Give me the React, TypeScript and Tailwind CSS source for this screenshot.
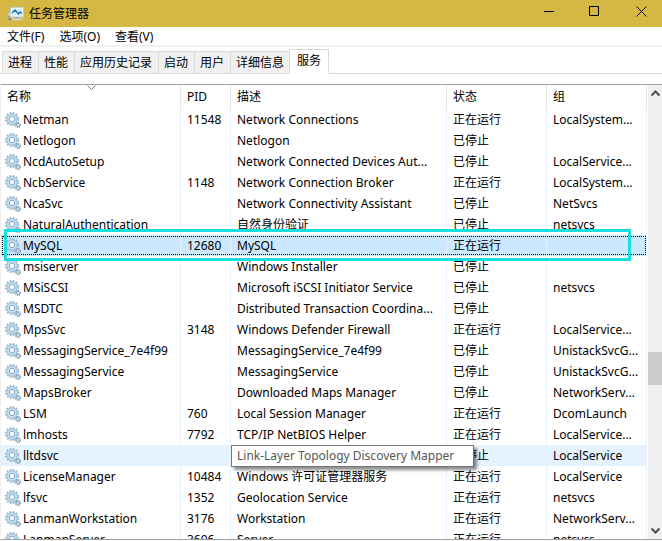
import { useState } from 'react';

const services: string[][] = [
  ['Netman', '11548', 'Network Connections', '正在运行', 'LocalSystem...'],
  ['Netlogon', '', 'Netlogon', '已停止', ''],
  ['NcdAutoSetup', '', 'Network Connected Devices Aut...', '已停止', 'LocalService...'],
  ['NcbService', '1148', 'Network Connection Broker', '正在运行', 'LocalSystem...'],
  ['NcaSvc', '', 'Network Connectivity Assistant', '已停止', 'NetSvcs'],
  ['NaturalAuthentication', '', '自然身份验证', '已停止', 'netsvcs'],
  ['MySQL', '12680', 'MySQL', '正在运行', ''],
  ['msiserver', '', 'Windows Installer', '已停止', ''],
  ['MSiSCSI', '', 'Microsoft iSCSI Initiator Service', '已停止', 'netsvcs'],
  ['MSDTC', '', 'Distributed Transaction Coordina...', '已停止', ''],
  ['MpsSvc', '3148', 'Windows Defender Firewall', '正在运行', 'LocalService...'],
  ['MessagingService_7e4f99', '', 'MessagingService_7e4f99', '已停止', 'UnistackSvcG...'],
  ['MessagingService', '', 'MessagingService', '已停止', 'UnistackSvcG...'],
  ['MapsBroker', '', 'Downloaded Maps Manager', '已停止', 'NetworkServ...'],
  ['LSM', '760', 'Local Session Manager', '正在运行', 'DcomLaunch'],
  ['lmhosts', '7792', 'TCP/IP NetBIOS Helper', '正在运行', 'LocalService...'],
  ['lltdsvc', '', 'Link-Layer Topology Discovery Mapper', '已停止', 'LocalService'],
  ['LicenseManager', '10484', 'Windows 许可证管理器服务', '正在运行', 'LocalService'],
  ['lfsvc', '1352', 'Geolocation Service', '正在运行', 'netsvcs'],
  ['LanmanWorkstation', '3176', 'Workstation', '正在运行', 'NetworkServ...'],
  ['LanmanServer', '3696', 'Server', '正在运行', 'netsvcs'],
];

const columns = ['名称', 'PID', '描述', '状态', '组'];
const tabs = ['进程', '性能', '应用历史记录', '启动', '用户', '详细信息', '服务'];
const menus = ['文件(F)', '选项(O)', '查看(V)'];

function GearIcon() {
  return (
    <svg width="16" height="17" viewBox="0 0 16 17" className="shrink-0" aria-hidden="true">
      <circle cx="7" cy="8" r="6.2" fill="none" stroke="#9cb6c8" strokeWidth="1.8" strokeDasharray="1.8 1.446" />
      <circle cx="7" cy="8" r="4.1" fill="none" stroke="#bfdff2" strokeWidth="3" />
      <circle cx="7" cy="8" r="5.3" fill="none" stroke="#8db2cb" strokeWidth="0.7" />
      <circle cx="7" cy="8" r="2.7" fill="#fff" stroke="#7f9fb8" strokeWidth="0.9" />
      <circle cx="13" cy="14" r="2.5" fill="none" stroke="#7f9cb2" strokeWidth="1.300" strokeDasharray="1.05 0.913" />
      <circle cx="13" cy="14" r="1.5" fill="#eef6fb" stroke="#8ba8bc" strokeWidth="1.1" />
    </svg>
  );
}

function MonitorIcon() {
  return (
    <svg width="16" height="16" viewBox="0 0 16 16" aria-hidden="true">
      <path d="M0 6h3v8H0z" fill="#a9a58c" />
      <path d="M.5 6.500h1.500v3H.5z" fill="#e6e6dc" />
      <path d="M1 13.500h2" stroke="#4e6b66" />
      <rect x="2.500" y="1.500" width="13" height="9.500" fill="#e8f4fa" stroke="#c3cbcb" />
      <rect x="4" y="3" width="10" height="6.500" fill="#d3ecf8" />
      <path d="M4 7 7 4l3.500 4 1.500-2 2 1.500" stroke="#1479b4" strokeWidth="1.300" fill="none" />
      <path d="M7 11.500h4v1.500H7z" fill="#a7adab" />
      <path d="M4.500 13.500h9" stroke="#d8dcd8" strokeWidth="1.500" />
    </svg>
  );
}

function Chevron({ d }: { d: string }) {
  return (
    <svg width="9" height="7" viewBox="0 0 9 7" fill="none" stroke="#505050" strokeWidth="2" aria-hidden="true">
      <path d={d} />
    </svg>
  );
}

export default function App() {
  const [tab, setTab] = useState('服务');
  return (
    <div className="flex h-screen flex-col overflow-hidden bg-white font-['Noto_Sans','Noto_Sans_CJK_SC',sans-serif] text-xs text-black">
      <header className="flex h-[27px] shrink-0 items-center bg-[#d5b844] pl-2">
        <MonitorIcon />
        <h1 className="ml-[5px] flex-1 leading-4">任务管理器</h1>
        <div className="flex items-center self-stretch pb-1">
          <button aria-label="最小化" className="flex w-[45px] justify-center">
            <svg width="11" height="11" stroke="#000" fill="none"><path d="M0 5.5h10" /></svg>
          </button>
          <button aria-label="最大化" className="flex w-[45px] justify-center">
            <svg width="11" height="11" stroke="#000" fill="none"><path d="M.5.5h9v9h-9z" /></svg>
          </button>
          <button aria-label="关闭" className="flex w-[45px] justify-center pl-[3px]">
            <svg width="11" height="11" stroke="#000" fill="none"><path d="m.5.500 10 10m0-10-10 10" /></svg>
          </button>
        </div>
      </header>

      <nav className="flex h-5 shrink-0 items-end gap-[15px] border-b-2 border-[#f0f0f0] pl-[7px]">
        {menus.map((m) => (
          <button key={m} className="leading-4">{m}</button>
        ))}
      </nav>

      <div role="tablist" className="mt-[2px] flex h-[25px] shrink-0 items-end border-b border-[#d9d9d9] pl-[2px]">
        {tabs.map((t) => (
          <button
            key={t}
            role="tab"
            aria-selected={t === tab}
            onClick={() => setTab(t)}
            className={
              t === tab
                ? '-mb-px -ml-px flex h-[25px] items-center border border-[#d9d9d9] border-b-white bg-white px-[7px] pb-[2px]'
                : 'flex h-[22px] items-center border-t border-l border-[#d9d9d9] bg-[#f0f0f0] pt-px pr-[6px] pl-[5px]'
            }
          >
            {t}
          </button>
        ))}
      </div>

      <main className="mt-[10px] mb-px flex min-h-0 flex-1 border-y border-y-[#a0a0a0] border-l border-l-[#f0f0f0]">
        <div className="min-w-0 flex-1 overflow-hidden">
          <table className="w-full table-fixed border-separate border-spacing-0 text-left">
            <colgroup>
              <col className="w-[180px]" />
              <col className="w-[50px]" />
              <col className="w-[216px]" />
              <col className="w-[100px]" />
              <col />
            </colgroup>
            <thead>
              <tr className="h-6">
                {columns.map((c, i) => (
                  <th key={c} scope="col" className="relative border-r border-[#e5e5e5] p-0 pl-[6px] font-normal">
                    {c}
                    {i === 0 && (
                      <svg width="9" height="5" className="absolute top-0 left-[86px]" fill="none" stroke="#808080" aria-hidden="true">
                        <path d="m.5.500 4 4 4-4" />
                      </svg>
                    )}
                  </th>
                ))}
              </tr>
            </thead>
            <tbody>
              {services.map((s) => {
                const selected = s[0] === 'MySQL';
                const hovered = s[0] === 'lltdsvc';
                return (
                  <tr key={s[0]} className={`relative h-[21px] ${selected ? 'bg-[#cce8ff]' : hovered ? 'bg-[#e5f3ff]' : ''}`}>
                    <td className="border-r border-[#e5f1ff] p-0 pl-1">
                      <div className="flex h-[21px] items-center gap-[2px]">
                        <GearIcon />
                        <span>{s[0]}</span>
                      </div>
                      {selected && (
                        <>
                          <span className="absolute inset-x-px top-px bottom-px border border-dotted border-black" />
                          <span className="absolute -top-[6px] right-4 -bottom-[5px] left-[3px] z-10 border-3 border-[#18dfe0]" />
                        </>
                      )}
                    </td>
                    <td className="border-r border-[#e5f1ff] p-0 pl-[6px]">{s[1]}</td>
                    <td className="border-r border-[#e5f1ff] p-0 pl-[6px] whitespace-nowrap">
                      {hovered ? (
                        <span role="tooltip" className="absolute top-0 left-[230px] z-10 h-[22px] min-w-[243px] border border-[#767676] bg-white px-[5px] leading-5 text-[#575757] shadow-[3px_3px_3px_rgba(0,0,0,0.45)]">
                          {s[2]}
                        </span>
                      ) : (
                        s[2]
                      )}
                    </td>
                    <td className="border-r border-[#e5f1ff] p-0 pl-[6px]">{s[3]}</td>
                    <td className="border-r border-[#e5f1ff] p-0 pl-[6px] whitespace-nowrap">{s[4]}</td>
                  </tr>
                );
              })}
            </tbody>
          </table>
        </div>
        <div className="ml-px flex w-[14px] shrink-0 flex-col items-start bg-[#f0f0f0]">
          <button aria-label="向上滚动" className="flex h-[17px] items-center pl-[3px]">
            <Chevron d="m.5 5.500 4-4 4 4" />
          </button>
          <div className="grow-[250]" />
          <div className="h-[33px] w-full bg-[#cdcdcd]" />
          <div className="grow-[137]" />
          <button aria-label="向下滚动" className="flex h-[17px] items-center pl-[3px]">
            <Chevron d="m.5 1.500 4 4 4-4" />
          </button>
        </div>
      </main>
    </div>
  );
}
